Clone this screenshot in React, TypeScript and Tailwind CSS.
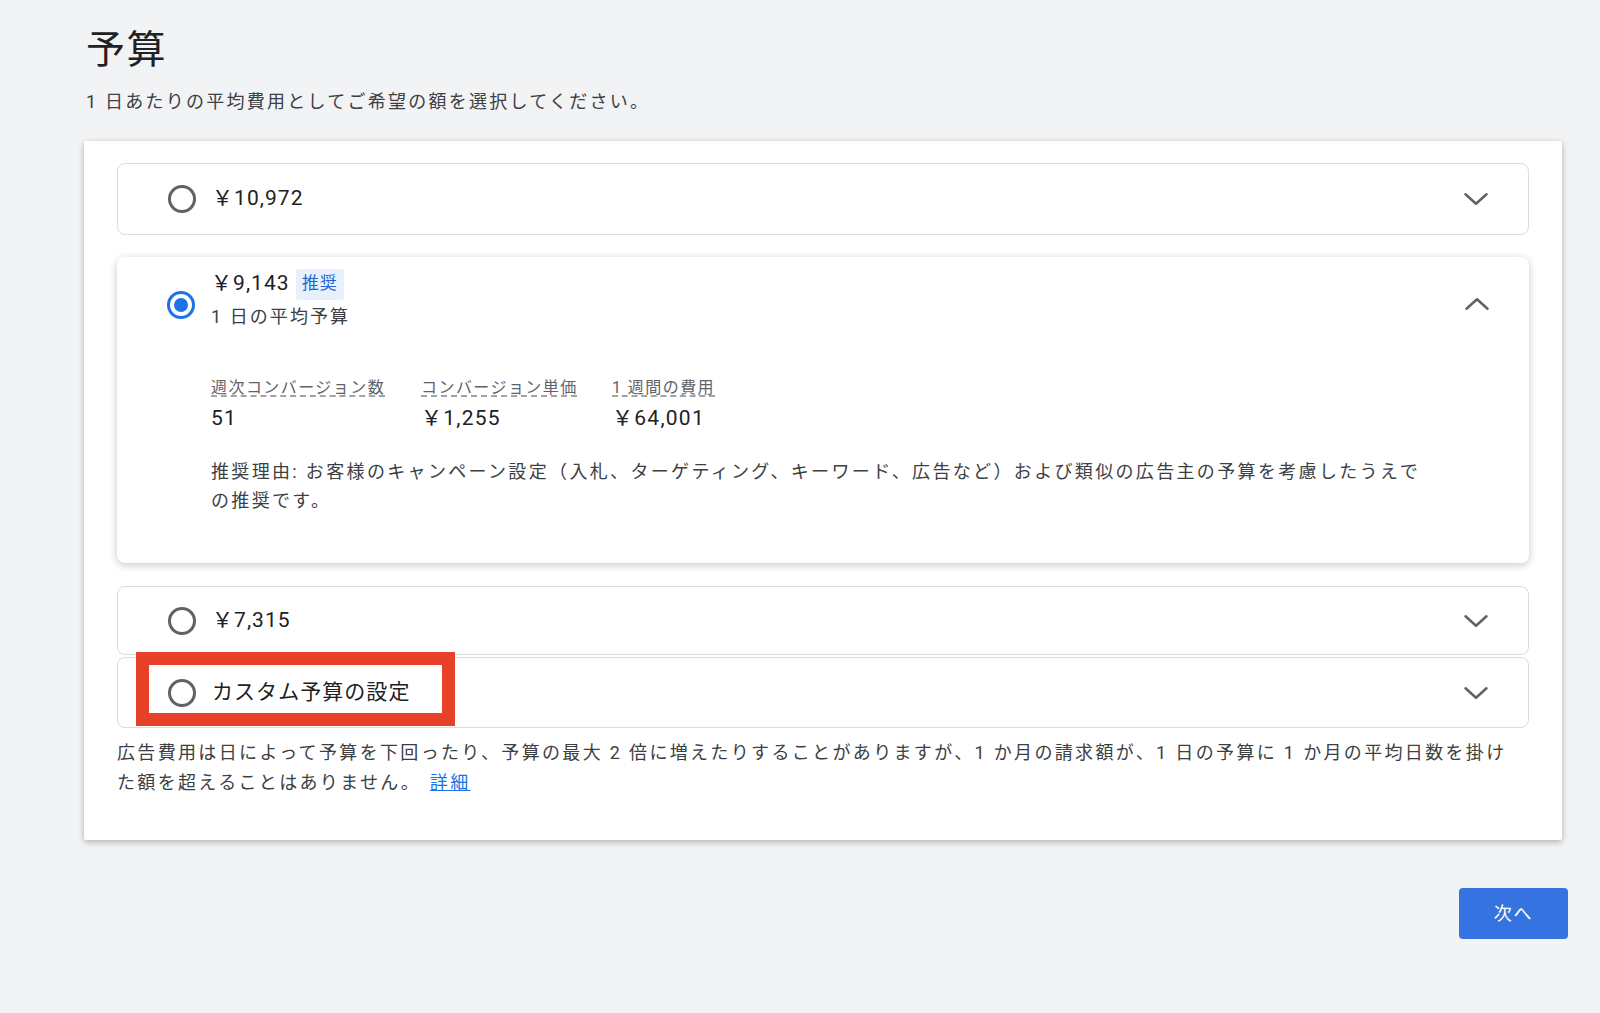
import React from "react";

const font = { fontFamily: "Roboto, 'Noto Sans CJK JP', sans-serif" };

function Radio({ checked }: { checked?: boolean }) {
  if (checked) {
    return (
      <span className="flex h-[28px] w-[28px] items-center justify-center rounded-full border-[3px] border-[#1a73e8]">
        <span className="h-[14px] w-[14px] rounded-full bg-[#1a73e8]" />
      </span>
    );
  }
  return <span className="block h-[28px] w-[28px] rounded-full border-[3px] border-[#5f6368]" />;
}

function Chevron({ up }: { up?: boolean }) {
  return (
    <svg width="28" height="28" viewBox="0 0 24 24" fill="none" stroke="#5f6368" strokeWidth="2.2" strokeLinecap="round" strokeLinejoin="round">
      {up ? <path d="M3 16l9-8 9 8" /> : <path d="M3 8l9 8 9-8" />}
    </svg>
  );
}

function CollapsedOption({ label, className }: { label: string; className: string }) {
  return (
    <div className={`flex items-center rounded-[8px] border border-[#dadce0] bg-white pl-[50px] pr-[38px] ${className}`}>
      <Radio />
      <span className="ml-[16px] flex-1 text-[21px] tracking-[0.05em] text-[#202124]">{label}</span>
      <Chevron />
    </div>
  );
}

const metrics = [
  { label: "週次コンバージョン数", value: "51", w: "w-[210px]" },
  { label: "コンバージョン単価", value: "￥1,255", w: "w-[191px]" },
  { label: "1 週間の費用", value: "￥64,001", w: "w-[160px]" },
];

export default function App() {
  return (
    <div className="min-h-screen bg-[#f1f3f4] pb-[74px]" style={font}>
      <div className="ml-[84px] w-[1478px] pt-[26px]">
        <h1 className="ml-[2px] text-[39px] leading-[48px] tracking-[0.04em] text-[#202124]">予算</h1>
        <p className="ml-[2px] mt-[15px] text-[18px] leading-[26px] tracking-[0.125em] text-[#3c4043]">
          1 日あたりの平均費用としてご希望の額を選択してください。
        </p>

        <div className="mt-[26px] rounded-[2px] bg-white px-[33px] pb-[42px] pt-[22px] shadow-[0_2px_6px_rgba(0,0,0,0.28)]">
          <CollapsedOption label="￥10,972" className="h-[72px]" />

          {/* expanded, recommended */}
          <div className="relative mt-[22px] rounded-[8px] bg-white pb-[48px] pl-[50px] pr-[38px] pt-[11px] shadow-[0_2px_8px_rgba(0,0,0,0.22)]">
            <div className="flex items-start">
              <div className="mt-[23px]">
                <Radio checked />
              </div>
              <div className="ml-[16px] flex-1">
                <div className="flex h-[32px] items-center">
                  <span className="text-[21px] tracking-[0.05em] text-[#202124]">￥9,143</span>
                  <span className="ml-[6px] flex h-[31px] items-center rounded-[3px] bg-[#e8f0fe] px-[6px] text-[17px] tracking-[0.06em] text-[#1967d2]">推奨</span>
                </div>
                <div className="text-[18px] leading-[33px] tracking-[0.115em] text-[#3c4043]">1 日の平均予算</div>
              </div>
              <div className="mt-[22px]">
                <Chevron up />
              </div>
            </div>

            <div className="ml-[44px] mt-[43px] flex">
              {metrics.map((m) => (
                <div key={m.label} className={m.w}>
                  <div className="text-[16px] leading-[24px] tracking-[0.09em] text-[#5f6368] underline decoration-dashed decoration-[#80868b] underline-offset-[3px]">
                    {m.label}
                  </div>
                  <div className="mt-[2px] text-[21px] leading-[32px] tracking-[0.06em] text-[#202124]">{m.value}</div>
                </div>
              ))}
            </div>

            <p className="ml-[44px] mt-[23px] w-[1270px] text-[18px] leading-[29px] tracking-[0.13em] text-[#3c4043]">
              推奨理由: お客様のキャンペーン設定（入札、ターゲティング、キーワード、広告など）および類似の広告主の予算を考慮したうえで
              <br />
              の推奨です。
            </p>
          </div>

          <CollapsedOption label="￥7,315" className="mt-[23px] h-[69px]" />
          <div className="relative mt-[2px]">
            <CollapsedOption label="カスタム予算の設定" className="h-[71px]" />
            <div className="pointer-events-none absolute left-[19px] top-[-5px] h-[74px] w-[319px] border-[13px] border-[#e8412a]" />
          </div>

          <p className="mt-[10px] whitespace-nowrap text-[18px] leading-[30px] tracking-[0.13em] text-[#3c4043]">
            広告費用は日によって予算を下回ったり、予算の最大 2 倍に増えたりすることがありますが、1 か月の請求額が、1 日の予算に 1 か月の平均日数を掛け
            <br />
            た額を超えることはありません。{" "}
            <a href="#" className="ml-[2px] text-[#1a73e8] underline">
              詳細
            </a>
          </p>
        </div>
      </div>

      <div className="mt-[48px] flex w-[1568px] justify-end">
        <button className="h-[51px] w-[109px] rounded-[4px] bg-[#3574e0] text-[18px] tracking-[0.1em] text-white">次へ</button>
      </div>
    </div>
  );
}
